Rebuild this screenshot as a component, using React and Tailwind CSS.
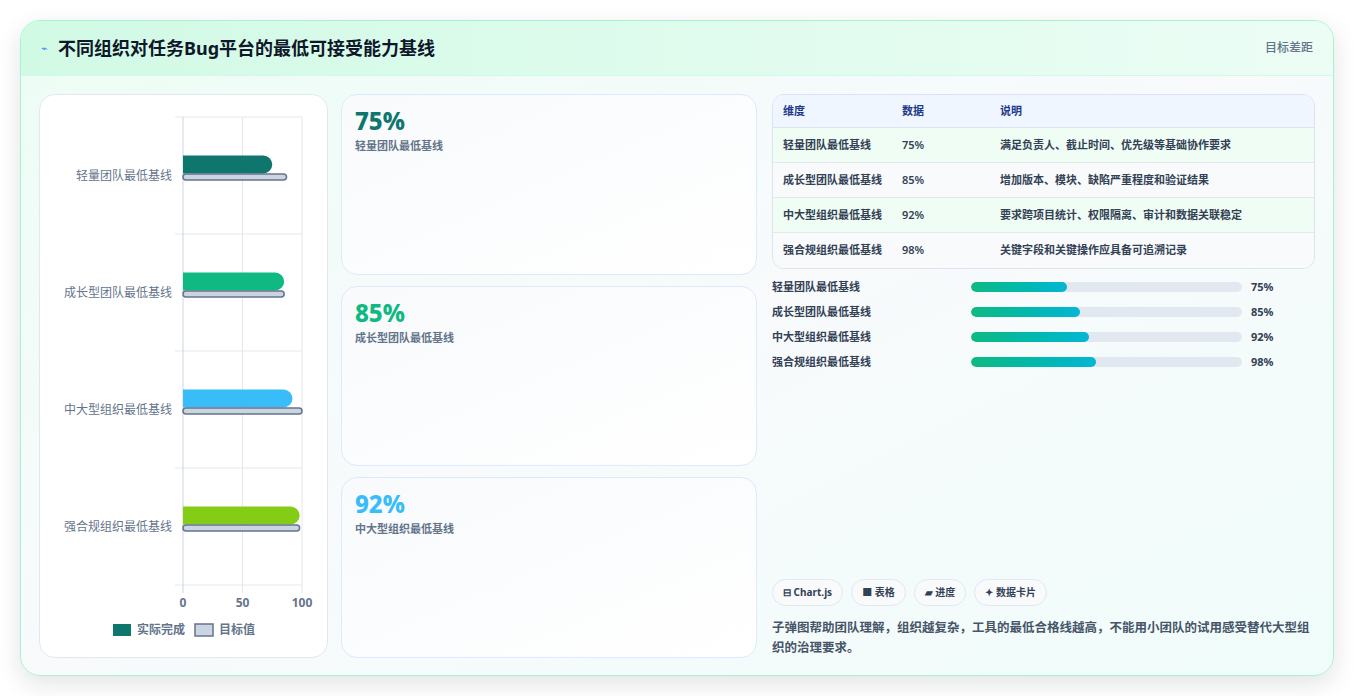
const rows = [
  { name: "轻量团队最低基线", v: 75, t: 87, color: "#0f766e", desc: "满足负责人、截止时间、优先级等基础协作要求", w: 96 },
  { name: "成长型团队最低基线", v: 85, t: 85, color: "#10b981", desc: "增加版本、模块、缺陷严重程度和验证结果", w: 109 },
  { name: "中大型组织最低基线", v: 92, t: 100, color: "#38bdf8", desc: "要求跨项目统计、权限隔离、审计和数据关联稳定", w: 118 },
  { name: "强合规组织最低基线", v: 98, t: 98, color: "#84cc16", desc: "关键字段和关键操作应具备可追溯记录", w: 125 },
];

function Chart() {
  // plot: x 143..262 in card coords, y 22..489
  const x0 = 143, pw = 119, y0 = 22, rh = 117;
  return (
    <svg width="289" height="564" className="block">
      {[0, 1, 2, 3, 4].map((i) => (
        <line key={i} x1={x0 - 8} x2={x0 + pw} y1={y0 + i * rh} y2={y0 + i * rh} stroke="#e5e7eb" />
      ))}
      {[0, 50, 100].map((t) => (
        <g key={t}>
          <line x1={x0 + (t / 100) * pw} x2={x0 + (t / 100) * pw} y1={y0} y2={y0 + 4 * rh + 8} stroke={t === 0 ? "#cbd5e1" : "#e5e7eb"} />
          <text x={x0 + (t / 100) * pw} y={512} textAnchor="middle" fontSize="12" fontWeight="700" fill="#64748b">{t}</text>
        </g>
      ))}
      {rows.map((r, i) => {
        const cy = y0 + i * rh + rh / 2;
        return (
          <g key={r.name}>
            <text x={132} y={cy + 4} textAnchor="end" fontSize="12" fill="#64748b">{r.name}</text>
            <path d={`M${x0} ${cy - 20} H${x0 + (r.v / 100) * pw - 9} a9 9 0 0 1 0 18 H${x0} Z`} fill={r.color} />
            <rect x={x0} y={cy - 1.5} width={(r.t / 100) * pw} height={6} rx={3} fill="#cbd5e1" stroke="#64748b" strokeWidth="1.5" />
          </g>
        );
      })}
      <rect x={73} y={529} width={18} height={12} fill="#0f766e" />
      <text x={97} y={539} fontSize="12" fontWeight="700" fill="#64748b">实际完成</text>
      <rect x={155} y={529} width={18} height={12} fill="#cbd5e1" stroke="#64748b" strokeWidth="1.5" />
      <text x={179} y={539} fontSize="12" fontWeight="700" fill="#64748b">目标值</text>
    </svg>
  );
}

export default function App() {
  return (
    <div className="w-[1354px] h-[696px] bg-white p-5" style={{ fontFamily: '"Noto Sans", "Noto Sans CJK SC", sans-serif' }}>
      <div className="h-[656px] rounded-[20px] border border-[#a7f3d0] overflow-hidden shadow-[0_8px_24px_rgba(15,23,42,0.12)] bg-gradient-to-br from-[#ecfdf5] via-[#f8fafc] to-[#f0fdfa] flex flex-col">
        <div className="h-[55px] shrink-0 flex items-center justify-between px-5 bg-gradient-to-r from-[#d1fae5] to-[#ecfdf5] border-b border-[#d1fae5]">
          <div className="flex items-center gap-2.5">
            <span className="text-[11px] text-[#3b82f6]">⌁</span>
            <h1 className="text-[18px] font-bold text-[#0f172a]">不同组织对任务Bug平台的最低可接受能力基线</h1>
          </div>
          <span className="text-[12px] text-[#64748b] font-medium">目标差距</span>
        </div>
        <div className="flex-1 flex gap-[13px] p-[18px] pb-[18px]">
          <div className="w-[289px] h-[564px] rounded-2xl bg-white border border-[#e2e8f0] overflow-hidden">
            <Chart />
          </div>
          <div className="w-[416px] flex flex-col gap-[11px]">
            {rows.slice(0, 3).map((r) => (
              <div key={r.name} className="flex-1 rounded-2xl border border-[#dbeafe] bg-gradient-to-br from-[#f8fafc] to-white px-[13px] py-[11px]">
                <div className="text-[24px] font-extrabold leading-[30px]" style={{ color: r.color }}>{r.v}%</div>
                <div className="text-[11px] font-bold text-[#64748b] mt-0.5">{r.name}</div>
              </div>
            ))}
          </div>
          <div className="flex-1 ml-[2px] flex flex-col">
            <div className="rounded-xl border border-[#dbe3ee] overflow-hidden bg-white text-[11px]">
              <div className="flex h-[33px] items-center bg-[#eff6ff] border-b border-[#dbe3ee] font-bold text-[#1e3a8a]">
                <span className="w-[129px] pl-[10px]">维度</span>
                <span className="w-[98px]">数据</span>
                <span>说明</span>
              </div>
              {rows.map((r, i) => (
                <div key={r.name} className={`flex h-[35px] items-center font-semibold text-[#334155] ${i < 3 ? "border-b border-[#e2e8f0]" : ""} ${i % 2 === 0 ? "bg-[#f0fdf4]" : "bg-[#f8fafc]"}`}>
                  <span className="w-[129px] pl-[10px]">{r.name}</span>
                  <span className="w-[98px]">{r.v}%</span>
                  <span>{r.desc}</span>
                </div>
              ))}
            </div>
            <div className="mt-[11px] flex flex-col gap-[11px]">
              {rows.map((r) => (
                <div key={r.name} className="flex items-center h-[14px] text-[11px] font-bold text-[#334155]">
                  <span className="w-[199px]">{r.name}</span>
                  <div className="w-[271px] h-[10px] rounded-full bg-[#e2e8f0] overflow-hidden">
                    <div className="h-full rounded-full bg-gradient-to-r from-[#10b981] to-[#06b6d4]" style={{ width: r.w }} />
                  </div>
                  <span className="ml-[9px]">{r.v}%</span>
                </div>
              ))}
            </div>
            <div className="mt-auto flex gap-2 text-[10px] font-bold text-[#334155]">
              {["⊟ Chart.js", "■ 表格", "▰ 进度", "✦ 数据卡片"].map((c) => (
                <span key={c} className="h-[27px] px-[10px] flex items-center rounded-full border border-[#e2e8f0] bg-[#f8fafc]">{c}</span>
              ))}
            </div>
            <p className="mt-[12px] text-[12.5px] leading-[20px] font-semibold text-[#475569]">
              子弹图帮助团队理解，组织越复杂，工具的最低合格线越高，不能用小团队的试用感受替代大型组织的治理要求。
            </p>
          </div>
        </div>
      </div>
    </div>
  );
}
